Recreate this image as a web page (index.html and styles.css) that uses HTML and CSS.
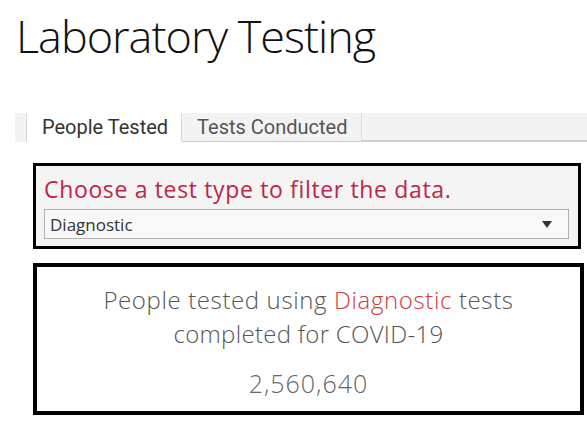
FILE: index.html
```html
<!DOCTYPE html>
<html>
<head>
<meta charset="utf-8">
<link rel="stylesheet" href="styles.css">
</head>
<body>
<h1 class="title">Laboratory Testing</h1>
<div class="tabbar">
  <div class="tab-lead"></div>
  <div class="tab active">People Tested</div>
  <div class="tab">Tests Conducted</div>
  <div class="tab-rest"></div>
</div>
<div class="filter">
  <div class="filter-label">Choose a test type to filter the data.</div>
  <div class="select">
    <span class="select-text">Diagnostic</span>
    <svg class="arrow" width="10" height="7" viewBox="0 0 10 7"><path d="M0 0H10L5 7Z" fill="#333"/></svg>
  </div>
</div>
<div class="summary">
  <div class="summary-text">
    <div class="line wide">People tested using <span class="hl">Diagnostic</span> tests</div>
    <div class="line">completed for COVID-19</div>
  </div>
  <div class="summary-num">2,560,640</div>
</div>
</body>
</html>
```
FILE: styles.css
```css
html, body { margin: 0; padding: 0; background: #fff; }
body { width: 587px; height: 423px; overflow: hidden; }
.title {
  margin: 0;
  padding: 8px 0 0 16px;
  font-family: "Open Sans", sans-serif;
  font-weight: 300;
  font-size: 45px;
  line-height: 56px;
  color: #111;
  letter-spacing: -1px;
}
.tabbar {
  display: flex;
  margin: 49px 0 0 15px;
  height: 29px;
  font-family: Roboto, sans-serif;
  font-size: 20px;
}
.tab-lead {
  width: 11px;
  background: #f3f3f3;
  border-right: 1px solid #d9d9d9;
}
.tab {
  display: flex;
  align-items: center;
  padding: 0 14px 0 15px;
  background: #f3f3f3;
  color: #555;
  border-right: 1px solid #d9d9d9;
  border-bottom: 1px solid #c8c8c8;
}
.tab.active {
  padding-right: 13px;
  background: #fff;
  color: #333;
  border-bottom-color: transparent;
}
.tab-rest {
  flex: 1;
  background: #f3f3f3;
  border-bottom: 2px solid #cfcfcf;
}
.filter {
  margin: 21px 6px 0 33px;
  height: 80px;
  border: 3px solid #000;
  background: #f4f4f4;
  padding: 0 9px 0 8px;
  font-family: "Open Sans", sans-serif;
}
.filter-label {
  color: #c0244b;
  font-size: 23px;
  line-height: 24px;
  letter-spacing: 0.65px;
  padding-top: 11px;
  height: 35px;
  box-sizing: border-box;
  white-space: nowrap;
}
.select {
  margin-top: 8px;
  height: 28px;
  border: 1px solid #b0b0b0;
  background: #f9f9f9;
  display: flex;
  align-items: center;
  justify-content: space-between;
  padding: 0 16px 0 5px;
}
.select-text { font-size: 17px; color: #333; }
.summary {
  margin: 14px 3px 0 33px;
  height: 144px;
  border: 4px solid #000;
  background: #fff;
  font-family: "Open Sans", sans-serif;
  font-weight: 300;
  text-align: center;
  color: #555;
}
.summary-text {
  font-size: 24px;
  line-height: 34px;
  letter-spacing: 0.3px;
  padding-top: 16px;
}
.line { white-space: nowrap; }
.line.wide { letter-spacing: 0.62px; }
.hl { color: #cf3a3a; }
.summary-num {
  font-size: 25px;
  line-height: 35px;
  letter-spacing: 1px;
  margin-top: 15px;
  color: #666;
}
```
